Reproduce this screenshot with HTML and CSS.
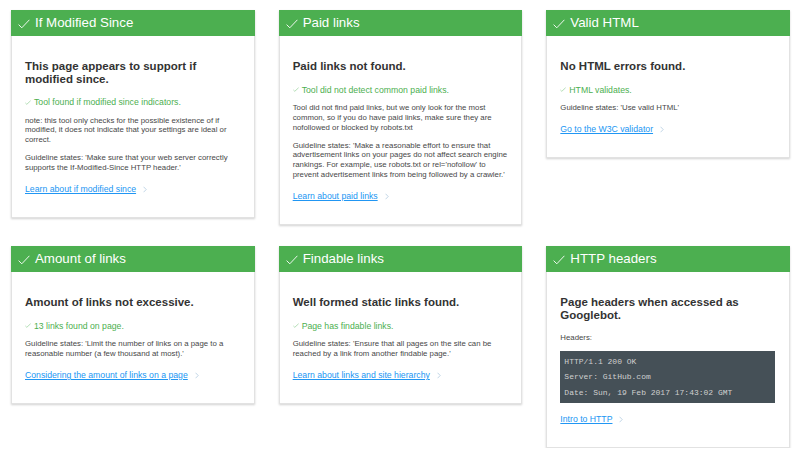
FILE: index.html
```html
<!DOCTYPE html>
<html lang="en">
<head>
<meta charset="utf-8">
<title>Checks</title>
<link rel="stylesheet" href="styles.css">
</head>
<body>
<main class="grid">

  <section class="card">
    <header class="card-head">
      <svg class="head-check" viewBox="0 0 12 10" aria-hidden="true"><path d="M0.6 5.6 L3.8 8.8 L11.4 0.8"/></svg>
      <h1>If Modified Since</h1>
    </header>
    <div class="card-body">
      <h2>This page appears to support if modified since.</h2>
      <p class="ok"><svg class="ok-check" viewBox="0 0 8 6" aria-hidden="true"><path d="M0.5 3.6 L2.4 5.4 L7.5 0.6"/></svg>Tool found if modified since indicators.</p>
      <p class="text">note: this tool only checks for the possible existence of if modified, it does not indicate that your settings are ideal or correct.</p>
      <p class="text">Guideline states: 'Make sure that your web server correctly supports the If-Modified-Since HTTP header.'</p>
      <p class="more"><a href="#">Learn about if modified since</a><svg class="chev" viewBox="0 0 5 8" aria-hidden="true"><path d="M0.7 0.6 L4 4 L0.7 7.4"/></svg></p>
    </div>
  </section>

  <section class="card">
    <header class="card-head">
      <svg class="head-check" viewBox="0 0 12 10" aria-hidden="true"><path d="M0.6 5.6 L3.8 8.8 L11.4 0.8"/></svg>
      <h1>Paid links</h1>
    </header>
    <div class="card-body">
      <h2>Paid links not found.</h2>
      <p class="ok"><svg class="ok-check" viewBox="0 0 8 6" aria-hidden="true"><path d="M0.5 3.6 L2.4 5.4 L7.5 0.6"/></svg>Tool did not detect common paid links.</p>
      <p class="text">Tool did not find paid links, but we only look for the most common, so if you do have paid links, make sure they are nofollowed or blocked by robots.txt</p>
      <p class="text">Guideline states: 'Make a reasonable effort to ensure that advertisement links on your pages do not affect search engine rankings. For example, use robots.txt or rel='nofollow' to prevent advertisement links from being followed by a crawler.'</p>
      <p class="more"><a href="#">Learn about paid links</a><svg class="chev" viewBox="0 0 5 8" aria-hidden="true"><path d="M0.7 0.6 L4 4 L0.7 7.4"/></svg></p>
    </div>
  </section>

  <section class="card">
    <header class="card-head">
      <svg class="head-check" viewBox="0 0 12 10" aria-hidden="true"><path d="M0.6 5.6 L3.8 8.8 L11.4 0.8"/></svg>
      <h1>Valid HTML</h1>
    </header>
    <div class="card-body">
      <h2>No HTML errors found.</h2>
      <p class="ok"><svg class="ok-check" viewBox="0 0 8 6" aria-hidden="true"><path d="M0.5 3.6 L2.4 5.4 L7.5 0.6"/></svg>HTML validates.</p>
      <p class="text">Guideline states: 'Use valid HTML'</p>
      <p class="more"><a href="#">Go to the W3C validator</a><svg class="chev" viewBox="0 0 5 8" aria-hidden="true"><path d="M0.7 0.6 L4 4 L0.7 7.4"/></svg></p>
    </div>
  </section>

  <section class="card">
    <header class="card-head">
      <svg class="head-check" viewBox="0 0 12 10" aria-hidden="true"><path d="M0.6 5.6 L3.8 8.8 L11.4 0.8"/></svg>
      <h1>Amount of links</h1>
    </header>
    <div class="card-body">
      <h2>Amount of links not excessive.</h2>
      <p class="ok"><svg class="ok-check" viewBox="0 0 8 6" aria-hidden="true"><path d="M0.5 3.6 L2.4 5.4 L7.5 0.6"/></svg>13 links found on page.</p>
      <p class="text">Guideline states: 'Limit the number of links on a page to a reasonable number (a few thousand at most).'</p>
      <p class="more"><a href="#">Considering the amount of links on a page</a><svg class="chev" viewBox="0 0 5 8" aria-hidden="true"><path d="M0.7 0.6 L4 4 L0.7 7.4"/></svg></p>
    </div>
  </section>

  <section class="card">
    <header class="card-head">
      <svg class="head-check" viewBox="0 0 12 10" aria-hidden="true"><path d="M0.6 5.6 L3.8 8.8 L11.4 0.8"/></svg>
      <h1>Findable links</h1>
    </header>
    <div class="card-body">
      <h2>Well formed static links found.</h2>
      <p class="ok"><svg class="ok-check" viewBox="0 0 8 6" aria-hidden="true"><path d="M0.5 3.6 L2.4 5.4 L7.5 0.6"/></svg>Page has findable links.</p>
      <p class="text">Guideline states: 'Ensure that all pages on the site can be reached by a link from another findable page.'</p>
      <p class="more"><a href="#">Learn about links and site hierarchy</a><svg class="chev" viewBox="0 0 5 8" aria-hidden="true"><path d="M0.7 0.6 L4 4 L0.7 7.4"/></svg></p>
    </div>
  </section>

  <section class="card">
    <header class="card-head">
      <svg class="head-check" viewBox="0 0 12 10" aria-hidden="true"><path d="M0.6 5.6 L3.8 8.8 L11.4 0.8"/></svg>
      <h1>HTTP headers</h1>
    </header>
    <div class="card-body">
      <h2>Page headers when accessed as Googlebot.</h2>
      <p class="text text-first">Headers:</p>
      <pre class="code">HTTP/1.1 200 OK
Server: GitHub.com
Date: Sun, 19 Feb 2017 17:43:02 GMT</pre>
      <p class="more"><a href="#">Intro to HTTP</a><svg class="chev" viewBox="0 0 5 8" aria-hidden="true"><path d="M0.7 0.6 L4 4 L0.7 7.4"/></svg></p>
    </div>
  </section>

</main>
</body>
</html>
```

FILE: styles.css
```css
html, body {
  margin: 0;
  padding: 0;
  background: #ffffff;
}

body {
  font-family: "Liberation Sans", Arial, Helvetica, sans-serif;
  color: #444444;
}

.grid {
  display: grid;
  grid-template-columns: repeat(3, 1fr);
  column-gap: 24px;
  row-gap: 21px;
  align-items: start;
  padding: 10px 10px 0 11px;
}

.card {
  background: #ffffff;
  box-shadow: 0 1px 2px rgba(0, 0, 0, 0.18);
}

.card-head {
  display: flex;
  align-items: center;
  height: 26px;
  padding: 0 8px 0 7px;
  background: #4caf50;
  color: #ffffff;
}

.head-check {
  width: 12px;
  height: 10px;
  margin-right: 5px;
  margin-top: 1px;
  fill: none;
  stroke: #ffffff;
  stroke-width: 0.9;
}

.card-head h1 {
  margin: 0;
  font-size: 13.3px;
  font-weight: normal;
  line-height: 16px;
}

.card-body {
  border: 1px solid #e2e2e2;
  border-top: none;
  padding: 24px 14px 23px 13px;
}

.card-body h2 {
  margin: 0;
  font-size: 11.5px;
  line-height: 12.6px;
  font-weight: bold;
  color: #333333;
}

.ok {
  margin: 12px 0 0;
  font-size: 8.7px;
  line-height: 10px;
  color: #4caf50;
  display: flex;
  align-items: center;
}

.ok-check {
  width: 6px;
  height: 5px;
  margin-right: 3px;
  fill: none;
  stroke: #81c784;
  stroke-width: 0.8;
}

.text {
  margin: 8.5px 0 0;
  font-size: 7.8px;
  line-height: 9.7px;
  color: #474747;
}

.text + .text {
  margin-top: 8.5px;
}

.text-first {
  margin-top: 11.5px;
}

.code {
  margin: 9px 0 0;
  padding: 2.5px 4px;
  background: #455057;
  color: #cfcfcf;
  font-family: "Liberation Mono", "Courier New", monospace;
  font-size: 8px;
  line-height: 15.5px;
  white-space: pre;
}

.more {
  margin: 11.5px 0 0;
  font-size: 8.7px;
  line-height: 10px;
  display: flex;
  align-items: center;
}

.more a {
  color: #2196f3;
  text-decoration: underline;
}

.chev {
  width: 4px;
  height: 7px;
  margin-left: 7px;
  fill: none;
  stroke: #9fbfd8;
  stroke-width: 0.8;
}
```
